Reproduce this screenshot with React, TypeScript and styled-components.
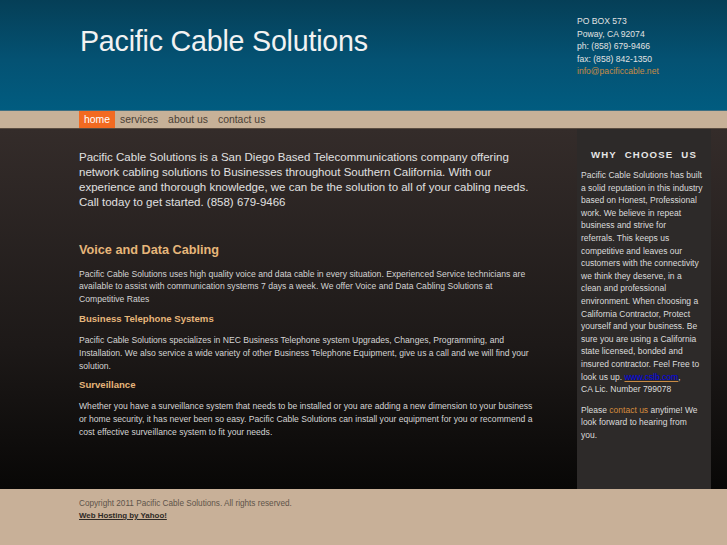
import React from 'react';
import styled, { createGlobalStyle } from 'styled-components';

const GlobalStyle = createGlobalStyle`
  html, body {
    margin: 0;
    padding: 0;
    background: #c8b098;
    font-family: "Liberation Sans", Arial, sans-serif;
  }
`;

const Page = styled.div`
  width: 727px;
  min-height: 545px;
  display: flex;
  flex-direction: column;
`;

const Header = styled.header`
  height: 110px;
  background: linear-gradient(to bottom, #053f57 0%, #045273 55%, #015c80 100%);
  display: flex;
  justify-content: space-between;
  padding-left: 80px;
  box-sizing: border-box;
`;

const Title = styled.h1`
  margin: 25px 0 0;
  font-size: 28.6px;
  font-weight: normal;
  color: #f2f2f2;
  letter-spacing: -0.2px;
`;

const Contact = styled.div`
  width: 150px;
  padding-top: 15px;
  font-size: 8.6px;
  line-height: 12.6px;
  color: #e2e2e2;
`;

const Email = styled.div`
  color: #c98b45;
`;

const Nav = styled.nav`
  height: 17px;
  background: #c7b198;
  border-top: 1px solid #3e6f82;
  border-bottom: 1px solid #5a4c40;
  display: flex;
  padding-left: 79px;
`;

const NavItem = styled.a<{ $active?: boolean }>`
  display: flex;
  align-items: center;
  padding: 0 5px;
  font-size: 10.4px;
  color: ${(p) => (p.$active ? '#ffffff' : '#4a3f36')};
  background: ${(p) => (p.$active ? '#f26a21' : 'transparent')};
  text-decoration: none;
`;

const Main = styled.main`
  height: 360px;
  background: linear-gradient(to bottom, #342c2a 0%, #1d1918 60%, #080706 100%);
  display: flex;
  padding-left: 79px;
`;

const Content = styled.section`
  width: 458px;
  padding-top: 21px;
`;

const Intro = styled.p`
  margin: 0;
  font-size: 11.5px;
  line-height: 14.9px;
  color: #e0e0e0;
`;

const SectionTitle = styled.h2`
  margin: 33px 0 11px;
  font-size: 12.7px;
  font-weight: bold;
  color: #e6b67a;
`;

const SubTitle = styled.h3`
  margin: 7px 0 10px;
  font-size: 9.6px;
  font-weight: bold;
  color: #e6b67a;
`;

const Body = styled.p`
  margin: 0;
  font-size: 8.6px;
  line-height: 12.8px;
  color: #d4d4d4;
`;

const Sidebar = styled.aside`
  margin-left: 40px;
  width: 134px;
  background: #2d2a29;
  padding: 20px 0 0 4px;
  box-sizing: border-box;
`;

const SideTitle = styled.h4`
  margin: 0 0 9px;
  padding-right: 4px;
  text-align: center;
  font-size: 9.6px;
  font-weight: bold;
  letter-spacing: 1.2px;
  word-spacing: 4px;
  color: #e6e6e6;
`;

const SideText = styled.p`
  margin: 0 0 8px;
  font-size: 8.5px;
  line-height: 12.6px;
  color: #dcdcdc;
  white-space: nowrap;
`;

const BlueLink = styled.a`
  color: #0000ee;
  text-decoration: underline;
  text-decoration-color: #c98b45;
`;

const OrangeLink = styled.a`
  color: #d68c3e;
  text-decoration: none;
`;

const Footer = styled.footer`
  flex: 1;
  background: #c8b098;
  padding: 8px 0 0 79px;
`;

const Copy = styled.div`
  font-size: 8.2px;
  line-height: 13px;
  color: #5e544a;
`;

const Hosting = styled.a`
  display: block;
  font-size: 7.9px;
  line-height: 12px;
  font-weight: bold;
  color: #2e2a26;
  text-decoration: underline;
`;

const sideLines = [
  'Pacific Cable Solutions has built',
  'a solid reputation in this industry',
  'based on Honest, Professional',
  'work. We believe in repeat',
  'business and strive for',
  'referrals. This keeps us',
  'competitive and leaves our',
  'customers with the connectivity',
  'we think they deserve, in a',
  'clean and professional',
  'environment. When choosing a',
  'California Contractor, Protect',
  'yourself and your business. Be',
  'sure you are using a California',
  'state licensed, bonded and',
  'insured contractor. Feel Free to',
];

export default function App() {
  return (
    <Page>
      <GlobalStyle />
      <Header>
        <Title>Pacific Cable Solutions</Title>
        <Contact>
          <div>PO BOX 573</div>
          <div>Poway, CA 92074</div>
          <div>ph: (858) 679-9466</div>
          <div>fax: (858) 842-1350</div>
          <Email>info@pacificcable.net</Email>
        </Contact>
      </Header>
      <Nav>
        <NavItem $active>home</NavItem>
        <NavItem>services</NavItem>
        <NavItem>about us</NavItem>
        <NavItem>contact us</NavItem>
      </Nav>
      <Main>
        <Content>
          <Intro>
            Pacific Cable Solutions is a San Diego Based Telecommunications company offering network
            cabling solutions to Businesses throughout Southern California. With our experience and
            thorough knowledge, we can be the solution to all of your cabling needs. Call today to get
            started. (858) 679-9466
          </Intro>
          <SectionTitle>Voice and Data Cabling</SectionTitle>
          <Body>
            Pacific Cable Solutions uses high quality voice and data cable in every situation. Experienced
            Service technicians are available to assist with communication systems 7 days a week. We offer
            Voice and Data Cabling Solutions at Competitive Rates
          </Body>
          <SubTitle>Business Telephone Systems</SubTitle>
          <Body>
            Pacific Cable Solutions specializes in NEC Business Telephone system Upgrades, Changes,
            Programming, and Installation. We also service a wide variety of other Business Telephone
            Equipment, give us a call and we will find your solution.
          </Body>
          <SubTitle>Surveillance</SubTitle>
          <Body>
            Whether you have a surveillance system that needs to be installed or you are adding a new
            dimension to your business or home security, it has never been so easy. Pacific Cable Solutions
            can install your equipment for you or recommend a cost effective surveillance system to fit
            your needs.
          </Body>
        </Content>
        <Sidebar>
          <SideTitle>WHY CHOOSE US</SideTitle>
          <SideText>
            {sideLines.map((line) => (
              <React.Fragment key={line}>
                {line}
                <br />
              </React.Fragment>
            ))}
            look us up. <BlueLink>www.cslb.com</BlueLink>,
            <br />
            CA Lic. Number 799078
          </SideText>
          <SideText>
            Please <OrangeLink>contact us</OrangeLink> anytime! We
            <br />
            look forward to hearing from
            <br />
            you.
          </SideText>
        </Sidebar>
      </Main>
      <Footer>
        <Copy>Copyright 2011 Pacific Cable Solutions. All rights reserved.</Copy>
        <Hosting>Web Hosting by Yahoo!</Hosting>
      </Footer>
    </Page>
  );
}
